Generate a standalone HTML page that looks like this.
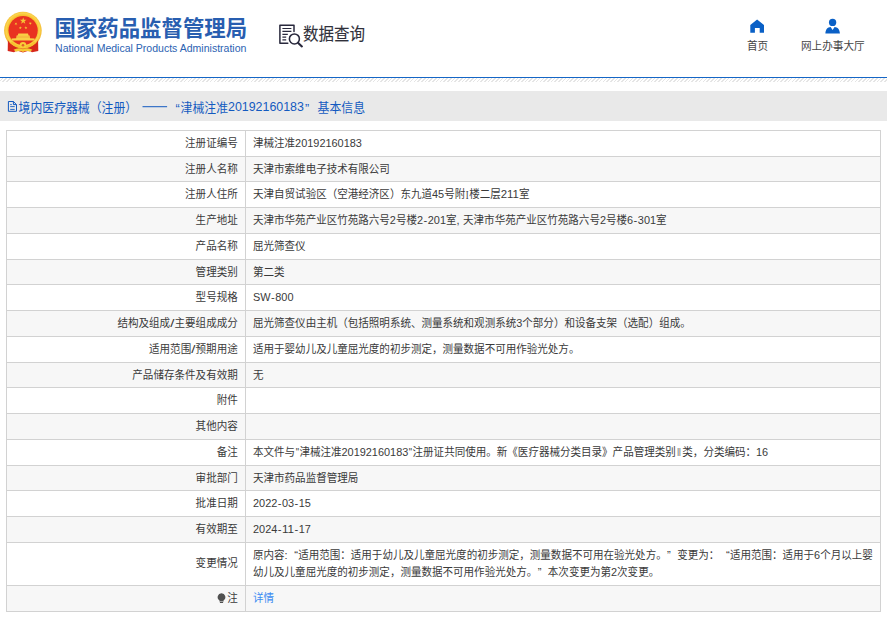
<!DOCTYPE html>
<html lang="zh-CN">
<head>
<meta charset="utf-8">
<title>国家药品监督管理局 数据查询</title>
<style>
html,body{margin:0;padding:0;background:#fff;}
body{width:887px;height:618px;position:relative;overflow:hidden;font-family:"Liberation Sans","Noto Sans CJK SC",sans-serif;font-size:12px;color:#3a3a3a;}
.sr{position:absolute;left:0;top:0;width:1px;height:1px;overflow:hidden;clip:rect(0 0 0 0);clip-path:inset(50%);white-space:nowrap;color:transparent;font-size:1px;}
.hdr{position:absolute;left:0;top:0;width:887px;height:76px;background:#fff;}
.blue{position:absolute;left:0;top:77px;width:887px;height:1px;background:#1566c6;}
.hatch{position:absolute;left:0;top:78px;width:887px;height:4px;background:repeating-linear-gradient(135deg,#fff 0,#fff 1.5px,#e5e5e5 1.5px,#e5e5e5 2.62px);}
.tbar{position:absolute;left:0;top:91px;width:887px;height:30px;background:#e9e9e9;}
.tbl{position:absolute;border:1px solid #d2d2d2;background:#fff;}
.row{position:absolute;left:7px;width:873px;}
.lab{position:absolute;left:0;top:0;width:238px;height:100%;}
.val{position:absolute;left:239px;top:0;right:0;height:100%;}
.hl{position:absolute;left:7px;width:873px;height:1px;background:#d2d2d2;}
.vl{position:absolute;width:1px;background:#d2d2d2;}
svg.ov{position:absolute;left:0;top:0;width:887px;height:618px;overflow:visible;font-family:"Liberation Sans","Noto Sans CJK SC",sans-serif;}
</style>
</head>
<body>
<div class="hdr"><span class="sr">国家药品监督管理局 National Medical Products Administration 数据查询 首页 网上办事大厅</span></div>
<div class="blue"></div>
<div class="hatch"></div>
<div class="tbar"><span class="sr">境内医疗器械（注册）—— “津械注准20192160183” 基本信息</span></div>
<div class="tbl" style="left:6px;top:130px;width:873px;height:480px"></div>
<div class="row" style="top:131px;height:25px;background:#fff"><div class="lab"><span class="sr">注册证编号</span></div><div class="val"><span class="sr">津械注准20192160183</span></div></div>
<div class="hl" style="top:156px"></div>
<div class="row" style="top:157px;height:24px;background:#f7f7f7"><div class="lab"><span class="sr">注册人名称</span></div><div class="val"><span class="sr">天津市索维电子技术有限公司</span></div></div>
<div class="hl" style="top:181px"></div>
<div class="row" style="top:182px;height:25px;background:#fff"><div class="lab"><span class="sr">注册人住所</span></div><div class="val"><span class="sr">天津自贸试验区（空港经济区）东九道45号附Ⅰ楼二层211室</span></div></div>
<div class="hl" style="top:207px"></div>
<div class="row" style="top:208px;height:25px;background:#f7f7f7"><div class="lab"><span class="sr">生产地址</span></div><div class="val"><span class="sr">天津市华苑产业区竹苑路六号2号楼2-201室, 天津市华苑产业区竹苑路六号2号楼6-301室</span></div></div>
<div class="hl" style="top:233px"></div>
<div class="row" style="top:234px;height:25px;background:#fff"><div class="lab"><span class="sr">产品名称</span></div><div class="val"><span class="sr">屈光筛查仪</span></div></div>
<div class="hl" style="top:259px"></div>
<div class="row" style="top:260px;height:24px;background:#f7f7f7"><div class="lab"><span class="sr">管理类别</span></div><div class="val"><span class="sr">第二类</span></div></div>
<div class="hl" style="top:284px"></div>
<div class="row" style="top:285px;height:25px;background:#fff"><div class="lab"><span class="sr">型号规格</span></div><div class="val"><span class="sr">SW-800</span></div></div>
<div class="hl" style="top:310px"></div>
<div class="row" style="top:311px;height:25px;background:#f7f7f7"><div class="lab"><span class="sr">结构及组成/主要组成成分</span></div><div class="val"><span class="sr">屈光筛查仪由主机（包括照明系统、测量系统和观测系统3个部分）和设备支架（选配）组成。</span></div></div>
<div class="hl" style="top:336px"></div>
<div class="row" style="top:337px;height:25px;background:#fff"><div class="lab"><span class="sr">适用范围/预期用途</span></div><div class="val"><span class="sr">适用于婴幼儿及儿童屈光度的初步测定，测量数据不可用作验光处方。</span></div></div>
<div class="hl" style="top:362px"></div>
<div class="row" style="top:363px;height:24px;background:#f7f7f7"><div class="lab"><span class="sr">产品储存条件及有效期</span></div><div class="val"><span class="sr">无</span></div></div>
<div class="hl" style="top:387px"></div>
<div class="row" style="top:388px;height:25px;background:#fff"><div class="lab"><span class="sr">附件</span></div><div class="val"><span class="sr"></span></div></div>
<div class="hl" style="top:413px"></div>
<div class="row" style="top:414px;height:25px;background:#f7f7f7"><div class="lab"><span class="sr">其他内容</span></div><div class="val"><span class="sr"></span></div></div>
<div class="hl" style="top:439px"></div>
<div class="row" style="top:440px;height:25px;background:#fff"><div class="lab"><span class="sr">备注</span></div><div class="val"><span class="sr">本文件与"津械注准20192160183"注册证共同使用。新《医疗器械分类目录》产品管理类别Ⅱ类，分类编码：16</span></div></div>
<div class="hl" style="top:465px"></div>
<div class="row" style="top:466px;height:24px;background:#f7f7f7"><div class="lab"><span class="sr">审批部门</span></div><div class="val"><span class="sr">天津市药品监督管理局</span></div></div>
<div class="hl" style="top:490px"></div>
<div class="row" style="top:491px;height:25px;background:#fff"><div class="lab"><span class="sr">批准日期</span></div><div class="val"><span class="sr">2022-03-15</span></div></div>
<div class="hl" style="top:516px"></div>
<div class="row" style="top:517px;height:25px;background:#f7f7f7"><div class="lab"><span class="sr">有效期至</span></div><div class="val"><span class="sr">2024-11-17</span></div></div>
<div class="hl" style="top:542px"></div>
<div class="row" style="top:543px;height:42px;background:#fff"><div class="lab"><span class="sr">变更情况</span></div><div class="val"><span class="sr">原内容:“适用范围：适用于幼儿及儿童屈光度的初步测定，测量数据不可用在验光处方。”变更为：“适用范围：适用于6个月以上婴幼儿及儿童屈光度的初步测定，测量数据不可用作验光处方。”本次变更为第2次变更。</span></div></div>
<div class="hl" style="top:585px"></div>
<div class="row" style="top:586px;height:25px;background:#f7f7f7"><div class="lab"><span class="sr">注</span></div><div class="val"><span class="sr">详情</span></div></div>
<div class="vl" style="left:245px;top:130px;height:481px"></div>
<svg class="ov" viewBox="0 0 887 618">
<g transform="translate(185.05,146.70)" fill="#3a3a3a" color="#3a3a3a"><text x="0" y="0" font-size="11.2" textLength="52.75" lengthAdjust="spacingAndGlyphs">注册证编号</text></g>
<g transform="translate(253.00,146.70)" fill="#3a3a3a" color="#3a3a3a"><text x="0" y="0" font-size="11.2" textLength="42.12" lengthAdjust="spacingAndGlyphs">津械注准</text><text x="42.12" y="0.25" font-size="10.7" textLength="66.77" lengthAdjust="spacingAndGlyphs">20192160183</text></g>
<g transform="translate(185.05,172.70)" fill="#3a3a3a" color="#3a3a3a"><text x="0" y="0" font-size="11.2" textLength="52.75" lengthAdjust="spacingAndGlyphs">注册人名称</text></g>
<g transform="translate(253.00,172.70)" fill="#3a3a3a" color="#3a3a3a"><text x="0" y="0" font-size="11.2" textLength="136.89" lengthAdjust="spacingAndGlyphs">天津市索维电子技术有限公司</text></g>
<g transform="translate(185.05,197.70)" fill="#3a3a3a" color="#3a3a3a"><text x="0" y="0" font-size="11.2" textLength="52.75" lengthAdjust="spacingAndGlyphs">注册人住所</text></g>
<g transform="translate(253.00,197.70)" fill="#3a3a3a" color="#3a3a3a"><text x="0" y="0" font-size="11.2" textLength="179.01" lengthAdjust="spacingAndGlyphs">天津自贸试验区（空港经济区）东九道</text><text x="179.01" y="0.25" font-size="10.7" textLength="12.14" lengthAdjust="spacingAndGlyphs">45</text><text x="191.14" y="0" font-size="11.2" textLength="21.06" lengthAdjust="spacingAndGlyphs">号附</text><text x="212.76" y="1.15" font-size="12.8" font-family="'Liberation Serif',serif" textLength="2.86" lengthAdjust="spacingAndGlyphs">I</text><text x="216.17" y="0" font-size="11.2" textLength="31.59" lengthAdjust="spacingAndGlyphs">楼二层</text><text x="247.76" y="0.25" font-size="10.7" textLength="18.21" lengthAdjust="spacingAndGlyphs">211</text><text x="265.96" y="0" font-size="11.2" textLength="10.53" lengthAdjust="spacingAndGlyphs">室</text></g>
<g transform="translate(195.60,223.70)" fill="#3a3a3a" color="#3a3a3a"><text x="0" y="0" font-size="11.2" textLength="42.2" lengthAdjust="spacingAndGlyphs">生产地址</text></g>
<g transform="translate(253.00,223.70)" fill="#3a3a3a" color="#3a3a3a"><text x="0" y="0" font-size="11.2" textLength="136.89" lengthAdjust="spacingAndGlyphs">天津市华苑产业区竹苑路六号</text><text x="136.89" y="0.25" font-size="10.7" textLength="6.07" lengthAdjust="spacingAndGlyphs">2</text><text x="142.96" y="0" font-size="11.2" textLength="21.06" lengthAdjust="spacingAndGlyphs">号楼</text><text x="164.02" y="0.25" font-size="10.7" textLength="6.07" lengthAdjust="spacingAndGlyphs">2</text><text x="170.56" y="0.25" font-size="10.7" textLength="3.75" lengthAdjust="spacingAndGlyphs">-</text><text x="174.78" y="0.25" font-size="10.7" textLength="18.21" lengthAdjust="spacingAndGlyphs">201</text><text x="192.99" y="0" font-size="11.2" textLength="10.53" lengthAdjust="spacingAndGlyphs">室</text><text x="203.52" y="0.25" font-size="10.7" textLength="3.03" lengthAdjust="spacingAndGlyphs">,</text><text x="210.05" y="0" font-size="11.2" textLength="136.89" lengthAdjust="spacingAndGlyphs">天津市华苑产业区竹苑路六号</text><text x="346.93" y="0.25" font-size="10.7" textLength="6.07" lengthAdjust="spacingAndGlyphs">2</text><text x="353.00" y="0" font-size="11.2" textLength="21.06" lengthAdjust="spacingAndGlyphs">号楼</text><text x="374.06" y="0.25" font-size="10.7" textLength="6.07" lengthAdjust="spacingAndGlyphs">6</text><text x="380.60" y="0.25" font-size="10.7" textLength="3.75" lengthAdjust="spacingAndGlyphs">-</text><text x="384.83" y="0.25" font-size="10.7" textLength="18.21" lengthAdjust="spacingAndGlyphs">301</text><text x="403.04" y="0" font-size="11.2" textLength="10.53" lengthAdjust="spacingAndGlyphs">室</text></g>
<g transform="translate(195.60,249.70)" fill="#3a3a3a" color="#3a3a3a"><text x="0" y="0" font-size="11.2" textLength="42.2" lengthAdjust="spacingAndGlyphs">产品名称</text></g>
<g transform="translate(253.00,249.70)" fill="#3a3a3a" color="#3a3a3a"><text x="0" y="0" font-size="11.2" textLength="52.65" lengthAdjust="spacingAndGlyphs">屈光筛查仪</text></g>
<g transform="translate(195.60,275.70)" fill="#3a3a3a" color="#3a3a3a"><text x="0" y="0" font-size="11.2" textLength="42.2" lengthAdjust="spacingAndGlyphs">管理类别</text></g>
<g transform="translate(253.00,275.70)" fill="#3a3a3a" color="#3a3a3a"><text x="0" y="0" font-size="11.2" textLength="31.59" lengthAdjust="spacingAndGlyphs">第二类</text></g>
<g transform="translate(195.60,300.70)" fill="#3a3a3a" color="#3a3a3a"><text x="0" y="0" font-size="11.2" textLength="42.2" lengthAdjust="spacingAndGlyphs">型号规格</text></g>
<g transform="translate(253.00,300.70)" fill="#3a3a3a" color="#3a3a3a"><text x="0.00" y="0.25" font-size="10.7" textLength="17.58" lengthAdjust="spacingAndGlyphs">SW</text><text x="18.05" y="0.25" font-size="10.7" textLength="3.75" lengthAdjust="spacingAndGlyphs">-</text><text x="22.27" y="0.25" font-size="10.7" textLength="18.21" lengthAdjust="spacingAndGlyphs">800</text></g>
<g transform="translate(117.38,326.70)" fill="#3a3a3a" color="#3a3a3a"><text x="0" y="0" font-size="11.2" textLength="52.75" lengthAdjust="spacingAndGlyphs">结构及组成</text><text x="52.84" y="0.25" font-size="10.7" textLength="4.19" lengthAdjust="spacingAndGlyphs">/</text><text x="57.11" y="0" font-size="11.2" textLength="63.3" lengthAdjust="spacingAndGlyphs">主要组成成分</text></g>
<g transform="translate(253.00,326.70)" fill="#3a3a3a" color="#3a3a3a"><text x="0" y="0" font-size="11.2" textLength="263.25" lengthAdjust="spacingAndGlyphs">屈光筛查仪由主机（包括照明系统、测量系统和观测系统</text><text x="263.25" y="0.25" font-size="10.7" textLength="6.07" lengthAdjust="spacingAndGlyphs">3</text><text x="269.31" y="0" font-size="11.2" textLength="168.48" lengthAdjust="spacingAndGlyphs">个部分）和设备支架（选配）组成。</text></g>
<g transform="translate(149.03,352.70)" fill="#3a3a3a" color="#3a3a3a"><text x="0" y="0" font-size="11.2" textLength="42.2" lengthAdjust="spacingAndGlyphs">适用范围</text><text x="42.29" y="0.25" font-size="10.7" textLength="4.19" lengthAdjust="spacingAndGlyphs">/</text><text x="46.56" y="0" font-size="11.2" textLength="42.2" lengthAdjust="spacingAndGlyphs">预期用途</text></g>
<g transform="translate(253.00,352.70)" fill="#3a3a3a" color="#3a3a3a"><text x="0" y="0" font-size="11.2" textLength="326.43" lengthAdjust="spacingAndGlyphs">适用于婴幼儿及儿童屈光度的初步测定，测量数据不可用作验光处方。</text></g>
<g transform="translate(132.30,378.70)" fill="#3a3a3a" color="#3a3a3a"><text x="0" y="0" font-size="11.2" textLength="105.5" lengthAdjust="spacingAndGlyphs">产品储存条件及有效期</text></g>
<g transform="translate(253.00,378.70)" fill="#3a3a3a" color="#3a3a3a"><text x="0" y="0" font-size="11.2" textLength="10.53" lengthAdjust="spacingAndGlyphs">无</text></g>
<g transform="translate(216.70,403.70)" fill="#3a3a3a" color="#3a3a3a"><text x="0" y="0" font-size="11.2" textLength="21.1" lengthAdjust="spacingAndGlyphs">附件</text></g>
<g transform="translate(195.60,429.70)" fill="#3a3a3a" color="#3a3a3a"><text x="0" y="0" font-size="11.2" textLength="42.2" lengthAdjust="spacingAndGlyphs">其他内容</text></g>
<g transform="translate(216.70,455.70)" fill="#3a3a3a" color="#3a3a3a"><text x="0" y="0" font-size="11.2" textLength="21.1" lengthAdjust="spacingAndGlyphs">备注</text></g>
<g transform="translate(253.00,455.70)" fill="#3a3a3a" color="#3a3a3a"><text x="0" y="0" font-size="11.2" textLength="42.12" lengthAdjust="spacingAndGlyphs">本文件与</text><text x="42.63" y="0.25" font-size="10.7" textLength="3.25" lengthAdjust="spacingAndGlyphs">&quot;</text><text x="46.40" y="0" font-size="11.2" textLength="42.12" lengthAdjust="spacingAndGlyphs">津械注准</text><text x="88.52" y="0.25" font-size="10.7" textLength="66.77" lengthAdjust="spacingAndGlyphs">20192160183</text><text x="155.80" y="0.25" font-size="10.7" textLength="3.25" lengthAdjust="spacingAndGlyphs">&quot;</text><text x="159.57" y="0" font-size="11.2" textLength="263.25" lengthAdjust="spacingAndGlyphs">注册证共同使用。新《医疗器械分类目录》产品管理类别</text><text x="423.1" y="0.25" font-size="10.7" textLength="6" lengthAdjust="spacingAndGlyphs">Ⅱ</text><text x="429.35" y="0" font-size="11.2" textLength="73.71" lengthAdjust="spacingAndGlyphs">类，分类编码：</text><text x="503.06" y="0.25" font-size="10.7" textLength="12.14" lengthAdjust="spacingAndGlyphs">16</text></g>
<g transform="translate(195.60,481.70)" fill="#3a3a3a" color="#3a3a3a"><text x="0" y="0" font-size="11.2" textLength="42.2" lengthAdjust="spacingAndGlyphs">审批部门</text></g>
<g transform="translate(253.00,481.70)" fill="#3a3a3a" color="#3a3a3a"><text x="0" y="0" font-size="11.2" textLength="105.3" lengthAdjust="spacingAndGlyphs">天津市药品监督管理局</text></g>
<g transform="translate(195.60,506.70)" fill="#3a3a3a" color="#3a3a3a"><text x="0" y="0" font-size="11.2" textLength="42.2" lengthAdjust="spacingAndGlyphs">批准日期</text></g>
<g transform="translate(253.00,506.70)" fill="#3a3a3a" color="#3a3a3a"><text x="0.00" y="0.25" font-size="10.7" textLength="24.28" lengthAdjust="spacingAndGlyphs">2022</text><text x="24.75" y="0.25" font-size="10.7" textLength="3.75" lengthAdjust="spacingAndGlyphs">-</text><text x="28.97" y="0.25" font-size="10.7" textLength="12.14" lengthAdjust="spacingAndGlyphs">03</text><text x="41.58" y="0.25" font-size="10.7" textLength="3.75" lengthAdjust="spacingAndGlyphs">-</text><text x="45.81" y="0.25" font-size="10.7" textLength="12.14" lengthAdjust="spacingAndGlyphs">15</text></g>
<g transform="translate(195.60,532.70)" fill="#3a3a3a" color="#3a3a3a"><text x="0" y="0" font-size="11.2" textLength="42.2" lengthAdjust="spacingAndGlyphs">有效期至</text></g>
<g transform="translate(253.00,532.70)" fill="#3a3a3a" color="#3a3a3a"><text x="0.00" y="0.25" font-size="10.7" textLength="24.28" lengthAdjust="spacingAndGlyphs">2024</text><text x="24.75" y="0.25" font-size="10.7" textLength="3.75" lengthAdjust="spacingAndGlyphs">-</text><text x="28.97" y="0.25" font-size="10.7" textLength="12.14" lengthAdjust="spacingAndGlyphs">11</text><text x="41.58" y="0.25" font-size="10.7" textLength="3.75" lengthAdjust="spacingAndGlyphs">-</text><text x="45.81" y="0.25" font-size="10.7" textLength="12.14" lengthAdjust="spacingAndGlyphs">17</text></g>
<g transform="translate(195.60,567.30)" fill="#3a3a3a" color="#3a3a3a"><text x="0" y="0" font-size="11.2" textLength="42.2" lengthAdjust="spacingAndGlyphs">变更情况</text></g>
<g transform="translate(253.00,558.70)" fill="#3a3a3a" color="#3a3a3a"><text x="0" y="0" font-size="11.2" textLength="31.59" lengthAdjust="spacingAndGlyphs">原内容</text><text x="31.59" y="0.25" font-size="10.7" textLength="3.03" lengthAdjust="spacingAndGlyphs">:</text><text x="41.2" y="0" font-size="11.2">“</text><text x="45.16" y="0" font-size="11.2" textLength="368.55" lengthAdjust="spacingAndGlyphs">适用范围：适用于幼儿及儿童屈光度的初步测定，测量数据不可用在验光处方。</text><text x="414.1" y="0" font-size="11.2">”</text><text x="424.23" y="0" font-size="11.2" textLength="42.12" lengthAdjust="spacingAndGlyphs">变更为：</text><text x="472.9" y="0" font-size="11.2">“</text><text x="476.88" y="0" font-size="11.2" textLength="84.24" lengthAdjust="spacingAndGlyphs">适用范围：适用于</text><text x="561.12" y="0.25" font-size="10.7" textLength="6.07" lengthAdjust="spacingAndGlyphs">6</text><text x="567.20" y="0" font-size="11.2" textLength="52.65" lengthAdjust="spacingAndGlyphs">个月以上婴</text></g>
<g transform="translate(253.00,576.00)" fill="#3a3a3a" color="#3a3a3a"><text x="0" y="0" font-size="11.2" textLength="284.31" lengthAdjust="spacingAndGlyphs">幼儿及儿童屈光度的初步测定，测量数据不可用作验光处方。</text><text x="284.7" y="0" font-size="11.2">”</text><text x="294.84" y="0" font-size="11.2" textLength="63.18" lengthAdjust="spacingAndGlyphs">本次变更为第</text><text x="358.02" y="0.25" font-size="10.7" textLength="6.07" lengthAdjust="spacingAndGlyphs">2</text><text x="364.09" y="0" font-size="11.2" textLength="42.12" lengthAdjust="spacingAndGlyphs">次变更。</text></g>
<g transform="translate(227.25,601.70)" fill="#3a3a3a" color="#3a3a3a"><text x="0" y="0" font-size="11.2" textLength="10.55" lengthAdjust="spacingAndGlyphs">注</text></g>
<g transform="translate(253.00,601.70)" fill="#3b8cf2" color="#3b8cf2"><text x="0" y="0" font-size="11.2" textLength="21.06" lengthAdjust="spacingAndGlyphs">详情</text></g>
<g transform="translate(18.60,111.70)" fill="#135ac0" color="#135ac0"><text x="0" y="0" font-size="12.6" textLength="118.5" lengthAdjust="spacingAndGlyphs">境内医疗器械（注册）</text></g>
<g transform="translate(180.60,111.70)" fill="#135ac0" color="#135ac0"><text x="0" y="0" font-size="12.6" textLength="47.4" lengthAdjust="spacingAndGlyphs">津械注准</text><text x="47.40" y="-0.60" font-size="12.1" textLength="75.95" lengthAdjust="spacingAndGlyphs">20192160183</text></g>
<g transform="translate(317.60,111.70)" fill="#135ac0" color="#135ac0"><text x="0" y="0" font-size="12.6" textLength="47.4" lengthAdjust="spacingAndGlyphs">基本信息</text></g>
<g transform="translate(167.81,112.90)" fill="#135ac0" color="#135ac0"><text x="7.6" y="0" font-size="12.6">“</text></g>
<g transform="translate(304.90,112.90)" fill="#135ac0" color="#135ac0"><text x="0.1" y="0" font-size="12.6">”</text></g>
<rect x="142.5" y="106.2" width="24.6" height="1" fill="#135ac0"/>
<g transform="translate(54.50,36.10)" fill="#285eb0" color="#285eb0"><text x="0" y="0" font-size="21.5" font-weight="bold" textLength="192.6" lengthAdjust="spacingAndGlyphs">国家药品监督管理局</text></g>
<g transform="translate(303.10,40.30)" fill="#30303a" color="#30303a"><text x="0" y="0" font-size="17" stroke="#30303a" stroke-width="0.12" textLength="62" lengthAdjust="spacingAndGlyphs">数据查询</text></g>
<g transform="translate(747.00,50.30)" fill="#444" color="#444"><text x="0" y="0" font-size="11.4" textLength="21.2" lengthAdjust="spacingAndGlyphs">首页</text></g>
<g transform="translate(801.00,50.30)" fill="#444" color="#444"><text x="0" y="0" font-size="11.4" textLength="63.6" lengthAdjust="spacingAndGlyphs">网上办事大厅</text></g>
<g id="emblem"><defs><radialGradient id="gold" cx="50%" cy="48%" r="52%"><stop offset="0.74" stop-color="#f7c02c"/><stop offset="0.86" stop-color="#fbd54e"/><stop offset="1" stop-color="#f0ad22"/></radialGradient></defs><circle cx="22.9" cy="30.6" r="18.8" fill="url(#gold)"/><circle cx="23.1" cy="30.5" r="14.6" fill="#e93321"/><path d="M7.9,40.2 Q9.5,43.5 13.2,45.6 Q18,47.9 23,47.9 Q28,47.9 32.8,45.6 Q36.5,43.5 38.1,40.2 L38.3,50.9 L32,52.3 L29.2,50.5 L23,52.6 L16.8,50.5 L14,52.3 L7.7,50.9 Z" fill="#d7271b"/><path d="M11.2,42.3 Q16.5,47.3 23,47.3 Q29.5,47.3 34.8,42.3" fill="none" stroke="#f6c02f" stroke-width="2.3"/><circle cx="23" cy="45.2" r="3.3" fill="#f8cd38"/><circle cx="23" cy="45.2" r="1.3" fill="#e0602c"/><path d="M13.6,49.7 Q18.5,46.9 23,49.2 Q27.5,46.9 32.4,49.7 L30,51.8 Q26,50 23,52 Q20,50 16,51.8 Z" fill="#f6c833"/><g fill="#f6c535"><polygon points="23.20,17.40 24.02,19.77 26.53,19.82 24.53,21.33 25.26,23.73 23.20,22.30 21.14,23.73 21.87,21.33 19.87,19.82 22.38,19.77"/><polygon points="16.70,22.41 16.48,23.54 17.47,24.13 16.33,24.28 16.07,25.39 15.58,24.35 14.44,24.45 15.27,23.67 14.83,22.61 15.83,23.16"/><polygon points="29.50,22.01 30.37,22.76 31.37,22.21 30.93,23.27 31.76,24.05 30.62,23.95 30.13,24.99 29.87,23.88 28.73,23.73 29.72,23.14"/><polygon points="20.68,26.22 20.86,27.36 21.98,27.58 20.97,28.10 21.10,29.24 20.29,28.43 19.25,28.91 19.77,27.89 18.99,27.05 20.12,27.22"/><polygon points="25.62,26.22 26.18,27.22 27.31,27.05 26.53,27.89 27.05,28.91 26.01,28.43 25.20,29.24 25.33,28.10 24.32,27.58 25.44,27.36"/></g><path d="M18.4,33.4 L28,33.4 L28.6,35.6 L29.6,35.6 L30,38.2 L34.6,38.6 L34.6,40.4 L11.6,40.4 L11.6,38.6 L16.2,38.2 L16.6,35.6 L17.6,35.6 Z" fill="#f9d045"/><path d="M17.2,36.3 H29 M16.6,37.4 H29.6" stroke="#f0a63a" stroke-width="0.5" fill="none"/></g>
<text x="55.1" y="52.3" font-size="10.7" fill="#2b62b2" textLength="191.3" lengthAdjust="spacingAndGlyphs">National Medical Products Administration</text>
<g id="qicon"><path d="M294.0,31.4 V25.3 H279.9 V43.2 H287.8" fill="none" stroke="#28283c" stroke-width="1.5" stroke-linejoin="round" stroke-linecap="round"/><path d="M282.4,28.5 H291.4 M282.4,31.4 H291.4 M282.4,34.3 H287.8 M282.4,37.1 H286.2 M282.4,39.9 H286.2" fill="none" stroke="#28283c" stroke-width="1.15"/><circle cx="294.4" cy="38.9" r="5.0" fill="none" stroke="#28283c" stroke-width="1.55"/><path d="M298.2,42.9 L301.9,46.4" stroke="#28283c" stroke-width="2.1" stroke-linecap="round"/></g>
<path d="M757.1,19.6 L764,25.1 V32.8 H759.7 V28.1 H754.9 V32.8 H750.3 V25.1 Z" fill="#0a60c6"/>
<g fill="#0a60c6"><circle cx="832.6" cy="22.4" r="3.65"/><path d="M825.4,33.6 C825.4,29.4 827.6,27.1 830.6,26.9 L832.6,30.1 L834.6,26.9 C837.6,27.1 839.9,29.4 839.9,33.6 Z"/></g>
<g fill="none" stroke="#135ac0" stroke-width="1"><path d="M13.4,101.5 H8.4 V111.3 H16.5 V104.6 Z M13.4,101.5 V104.6 H16.5"/><path d="M10.2,104.6 H11.8 M10.2,106.6 H14.7 M10.2,109.4 H14.7" stroke-width="0.9"/></g>
<path d="M221.5,593.2 a3.8,3.8 0 0 1 2.1,7 V601.4 H219.4 V600.2 A3.8,3.8 0 0 1 221.5,593.2 Z M219.9,602 H223.1 V602.9 H219.9 Z" fill="#505050"/>
</svg>
</body>
</html>
